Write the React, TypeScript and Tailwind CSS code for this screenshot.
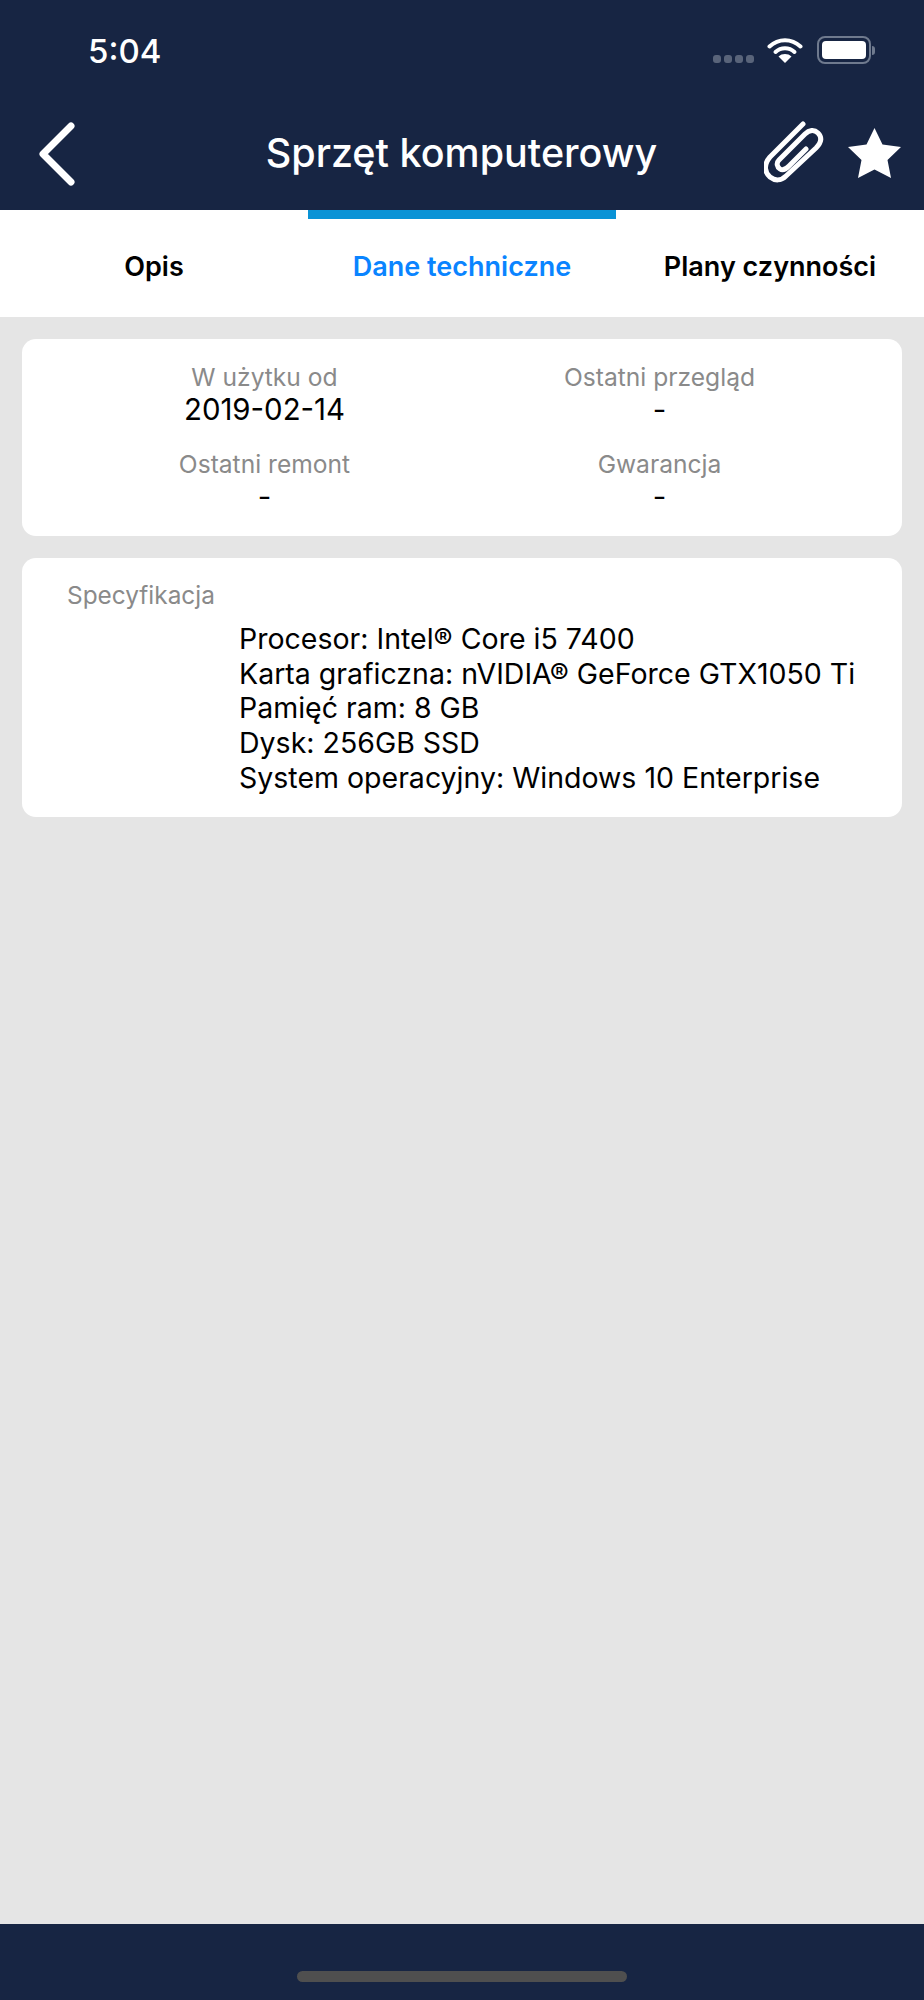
const specLines = [
  'Procesor: Intel® Core i5 7400',
  'Karta graficzna: nVIDIA® GeForce GTX1050 Ti',
  'Pamięć ram: 8 GB',
  'Dysk: 256GB SSD',
  'System operacyjny: Windows 10 Enterprise',
];

const infoItems = [
  { label: 'W użytku od', value: '2019-02-14' },
  { label: 'Ostatni przegląd', value: '-' },
  { label: 'Ostatni remont', value: '-' },
  { label: 'Gwarancja', value: '-' },
];

function StatusBar() {
  return (
    <div className="h-[100px] flex items-start justify-between pl-[88px] pr-[49px] pt-[31px]">
      <span className="text-[33px] leading-[40px] font-medium text-white">5:04</span>
      <div className="flex items-start pt-[5px]">
        <div className="flex gap-[3px] mt-[19px] mr-[13px]">
          <span className="w-[8px] h-[8px] rounded-[3px] bg-[#59647a]" />
          <span className="w-[8px] h-[8px] rounded-[3px] bg-[#59647a]" />
          <span className="w-[8px] h-[8px] rounded-[3px] bg-[#59647a]" />
          <span className="w-[8px] h-[8px] rounded-[3px] bg-[#59647a]" />
        </div>
        <svg width="36" height="26" viewBox="0 0 36 26" fill="none" className="mt-[1px] mr-[14px]">
          <path d="M2.5 9.5C11.5 1 24.5 1 33.5 9.5" stroke="white" strokeWidth="4" strokeLinecap="round" />
          <path d="M8.5 15C14 10 22 10 27.5 15" stroke="white" strokeWidth="4" strokeLinecap="round" />
          <path d="M18 26L11.5 19.5C15 16.2 21 16.2 24.5 19.5Z" fill="white" />
        </svg>
        <div className="flex items-center">
          <div className="w-[54px] h-[28px] rounded-[8px] border-2 border-[#6f7a8e] p-[3px]">
            <div className="w-full h-full rounded-[4px] bg-white" />
          </div>
          <span className="w-[3px] h-[9px] rounded-r-full bg-[#6f7a8e] ml-[1px]" />
        </div>
      </div>
    </div>
  );
}

function NavBar() {
  return (
    <div className="h-[110px] grid grid-cols-[1fr_auto_1fr] items-center pl-[38px] pr-[23px]">
      <svg width="38" height="64" viewBox="0 0 38 64" fill="none" className="mt-[-2px]">
        <path d="M33 4L5 32L33 60" stroke="white" strokeWidth="7" strokeLinecap="round" strokeLinejoin="round" />
      </svg>
      <h1 className="text-[39.5px] leading-[48px] font-medium text-white mt-[-4px] whitespace-nowrap ml-[-8px] mr-[8px]">
        Sprzęt komputerowy
      </h1>
      <div className="flex items-center justify-end gap-[24px] mt-[-5px]">
        <svg width="60" height="64" viewBox="0 0 60 64" fill="none">
          <path
            d="M39 3L6 36C-1 44 1 52 6 56C11 60 17 60 22 55L52 27C58 21 58 16 54 12C50 8 45 9 41 13L15 39C12 42 13 46 16 48C19 50 22 48 25 45L42 28"
            stroke="white"
            strokeWidth="5"
            strokeLinecap="round"
            strokeLinejoin="round"
          />
        </svg>
        <svg width="53" height="50" viewBox="0 0 53 50">
          <path d="M26.5 0L34.5 16.5L53 19L39.5 32L43 50L26.5 41.5L10 50L13.5 32L0 19L18.5 16.5Z" fill="white" />
        </svg>
      </div>
    </div>
  );
}

function Tabs() {
  return (
    <div className="h-[107px] bg-white grid grid-cols-3 text-[27px] font-semibold">
      <div className="flex items-center justify-center text-black pt-[7px]">Opis</div>
      <div className="flex flex-col text-[#0a84ff]">
        <div className="h-[9px] bg-[#0a93d6]" />
        <div className="flex-1 flex items-center justify-center pb-[2px] whitespace-nowrap">Dane techniczne</div>
      </div>
      <div className="flex items-center justify-center text-black pt-[7px] whitespace-nowrap">Plany czynności</div>
    </div>
  );
}

export default function App() {
  return (
    <div className="w-[924px] h-[2000px] flex flex-col bg-[#e5e5e5] font-['Inter','Noto_Sans',sans-serif]">
      <div className="bg-[#172543]">
        <StatusBar />
        <NavBar />
      </div>
      <Tabs />
      <div className="flex-1 px-[22px] pt-[22px] flex flex-col gap-[22px]">
        <div className="bg-white rounded-[14px] h-[197px] px-[45px] pt-[21px] grid grid-cols-2 auto-rows-[87px]">
          {infoItems.map((item) => (
            <div key={item.label} className="flex flex-col items-center">
              <span className="text-[24.6px] leading-[34px] text-[#8a8a8a]">{item.label}</span>
              <span className="text-[29.4px] leading-[32px] text-black">{item.value}</span>
            </div>
          ))}
        </div>
        <div className="bg-white rounded-[14px] h-[259px] pl-[45px] pt-[20px]">
          <div className="text-[24.4px] leading-[34px] text-[#8a8a8a]">Specyfikacja</div>
          <div className="pl-[172px] mt-[10px] text-[28.5px] leading-[34.7px] text-black whitespace-nowrap">
            {specLines.map((line) => (
              <div key={line}>{line}</div>
            ))}
          </div>
        </div>
      </div>
      <div className="h-[76px] bg-[#172543] flex justify-center pt-[47px]">
        <div className="w-[330px] h-[11px] rounded-full bg-[#4f4f4f]" />
      </div>
    </div>
  );
}
